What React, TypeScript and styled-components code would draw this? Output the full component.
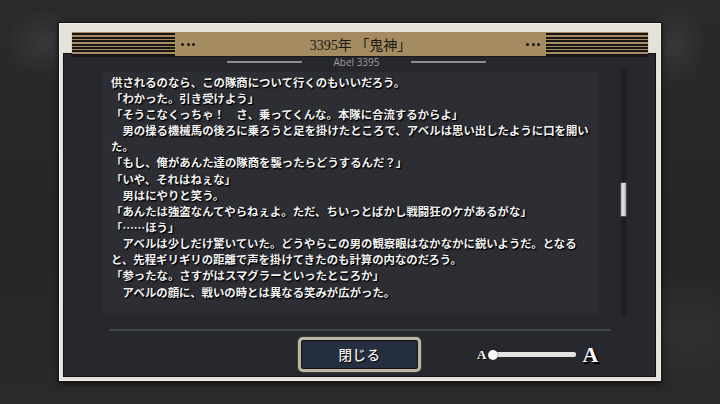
import React from "react";
import styled, { createGlobalStyle } from "styled-components";

const Global = createGlobalStyle`
  html, body { margin: 0; padding: 0; width: 720px; height: 404px; overflow: hidden; }
  body { background: #272727; font-family: "Noto Sans CJK JP", "Noto Sans", sans-serif; }
  * { box-sizing: border-box; }
`;

const Screen = styled.div`
  width: 720px;
  height: 404px;
  display: flex;
  align-items: center;
  justify-content: center;
  background:
    radial-gradient(ellipse 60px 50px at 45px 42px, rgba(255,255,255,0.07), transparent 70%),
    radial-gradient(ellipse 50px 60px at 672px 45px, rgba(255,255,255,0.07), transparent 70%),
    radial-gradient(ellipse 120px 80px at 690px 330px, rgba(255,255,255,0.04), transparent 70%),
    linear-gradient(180deg, #2a2a2a 0%, #262626 60%, #2a2a2a 100%);
`;

const Frame = styled.div`
  width: 604px;
  height: 360px;
  background: #e6e1da;
  border: 1px solid #141414;
  box-shadow: inset 0 0 0 1px #f4f1ec, 0 2px 6px rgba(0,0,0,0.5);
  padding: 9px 5px 4px 4px;
  display: flex;
  flex-direction: column;
`;

const Banner = styled.div`
  position: relative;
  z-index: 2;
  height: 24px;
  margin: 0 8px -3px 9px;
  background: #a48b62;
  display: flex;
  align-items: center;
  box-shadow: 0 1px 1px rgba(0,0,0,0.35);
`;

const Stripes = styled.div<{ $w: number }>`
  width: ${(p) => p.$w}px;
  height: 100%;
  background: repeating-linear-gradient(
    to bottom,
    #a48b62 0px,
    #a48b62 1.4px,
    #161514 1.4px,
    #161514 3.4px
  );
`;

const Dots = styled.div`
  display: flex;
  gap: 2.5px;
  margin: 0 6px;
  span {
    width: 3px;
    height: 3px;
    border-radius: 50%;
    background: #1a1712;
  }
`;

const Title = styled.div`
  flex: 1;
  text-align: center;
  font-family: "Liberation Serif", "Noto Sans CJK JP", serif;
  font-size: 14px;
  color: #1b1811;
  letter-spacing: 0px;
`;

const Panel = styled.div`
  flex: 1;
  background: #27282d;
  border: 1px solid #111;
  display: flex;
  flex-direction: column;
`;

const SubRow = styled.div`
  height: 16px;
  display: flex;
  align-items: center;
  justify-content: center;
  gap: 31px;
  padding-right: 6px;
`;

const SubLine = styled.div`
  width: 75px;
  height: 1.5px;
  background: #8d8d8d;
`;

const SubText = styled.div`
  font-family: "Open Sans", "Noto Sans", sans-serif;
  font-size: 10px;
  color: #9d9d9d;
  line-height: 1;
`;

const Body = styled.div`
  height: 245px;
  display: flex;
`;

const TextBox = styled.div`
  width: 496px;
  margin: 2px 0 2px 39px;
  background: #2d2e33;
  padding: 1.6px 0 0 8px;
  overflow: hidden;
`;

const Line = styled.div`
  white-space: nowrap;
  font-family: "Noto Sans CJK JP", sans-serif;
  font-weight: 700;
  font-size: 11.4px;
  line-height: 16.15px;
  color: #f2f2f2;
  text-shadow: 1px 1px 0 #000, 1px 1px 2px #000;
`;

const Scroll = styled.div`
  position: relative;
  width: 7px;
  margin-left: 21px;
  display: flex;
  justify-content: center;
`;

const Track = styled.div`
  width: 4px;
  height: 100%;
  background: #1d1e21;
  border-radius: 2px;
  box-shadow: 0 0 2px #1d1e21;
`;

const Thumb = styled.div`
  position: absolute;
  left: 0;
  top: 112px;
  width: 7px;
  height: 35px;
  border: 1px solid #4a4a4a;
  border-radius: 1px;
  background: linear-gradient(90deg, #a8a8a8 0%, #e4e4e4 35%, #d0d0d0 70%, #9a9a9a 100%);
`;

const Separator = styled.div`
  height: 2px;
  width: 502px;
  margin: 14px 0 0 45px;
  background: #3e4349;
`;

const Footer = styled.div`
  display: grid;
  grid-template-columns: 1fr auto 1fr;
  align-items: center;
  margin-top: 6px;
`;

const CloseButton = styled.button`
  grid-column: 2;
  width: 123px;
  height: 35px;
  border-radius: 5px;
  border: 3px solid #bcb6a5;
  box-shadow: 0 0 0 1px #3b3a36, inset 0 0 0 1px #151515, inset 0 1px 3px rgba(0,0,0,0.5);
  background: #262f3f;
  color: #f3f3f3;
  font-family: "Noto Sans CJK JP", sans-serif;
  font-weight: 500;
  font-size: 13.5px;
  letter-spacing: 0.5px;
  text-shadow: 1px 1px 1px #000;
  padding: 0 0 1px 0;
  cursor: pointer;
`;

const Slider = styled.div`
  grid-column: 3;
  justify-self: start;
  margin-left: 56px;
  display: flex;
  align-items: center;
`;

const Glyph = styled.span<{ $size: number }>`
  font-family: "Liberation Serif", serif;
  font-weight: 700;
  font-size: ${(p) => p.$size}px;
  line-height: 1;
  color: #fafafa;
  text-shadow: ${(p) => (p.$size > 16 ? "1.5px 1.5px 0 #000, 2px 2px 1px #000" : "1px 1px 0 #000")};
`;

const SliderTrack = styled.div`
  position: relative;
  width: 88px;
  height: 10px;
  margin: 0 6px 0 2px;
  display: flex;
  align-items: center;
`;

const Bar = styled.div`
  flex: 1;
  height: 4.5px;
  margin-left: 5px;
  border-radius: 2px;
  background: #e3e3e3;
`;

const Knob = styled.div`
  position: absolute;
  left: 0;
  top: 0;
  width: 10px;
  height: 10px;
  border-radius: 50%;
  background: #f6f6f6;
  box-shadow: 0 0 1px #000;
`;

const lines = [
  "供されるのなら、この隊商について行くのもいいだろう。",
  "「わかった。引き受けよう」",
  "「そうこなくっちゃ！　さ、乗ってくんな。本隊に合流するからよ」",
  "　男の操る機械馬の後ろに乗ろうと足を掛けたところで、アベルは思い出したように口を開い",
  "た。",
  "「もし、俺があんた達の隊商を襲ったらどうするんだ？」",
  "「いや、それはねぇな」",
  "　男はにやりと笑う。",
  "「あんたは強盗なんてやらねぇよ。ただ、ちいっとばかし戦闘狂のケがあるがな」",
  "「……ほう」",
  "　アベルは少しだけ驚いていた。どうやらこの男の観察眼はなかなかに鋭いようだ。となる",
  "と、先程ギリギリの距離で声を掛けてきたのも計算の内なのだろう。",
  "「参ったな。さすがはスマグラーといったところか」",
  "　アベルの顔に、戦いの時とは異なる笑みが広がった。",
];

export default function App() {
  return (
    <>
      <Global />
      <Screen>
        <Frame>
          <Banner>
            <Stripes $w={103} />
            <Dots>
              <span />
              <span />
              <span />
            </Dots>
            <Title>3395年 「鬼神」</Title>
            <Dots>
              <span />
              <span />
              <span />
            </Dots>
            <Stripes $w={102} />
          </Banner>
          <Panel>
            <SubRow>
              <SubLine />
              <SubText>Abel 3395</SubText>
              <SubLine />
            </SubRow>
            <Body>
              <TextBox>
                {lines.map((l, i) => (
                  <Line key={i}>{l}</Line>
                ))}
              </TextBox>
              <Scroll>
                <Track />
                <Thumb />
              </Scroll>
            </Body>
            <Separator />
            <Footer>
              <CloseButton>閉じる</CloseButton>
              <Slider>
                <Glyph $size={13}>A</Glyph>
                <SliderTrack>
                  <Bar />
                  <Knob />
                </SliderTrack>
                <Glyph $size={22}>A</Glyph>
              </Slider>
            </Footer>
          </Panel>
        </Frame>
      </Screen>
    </>
  );
}
